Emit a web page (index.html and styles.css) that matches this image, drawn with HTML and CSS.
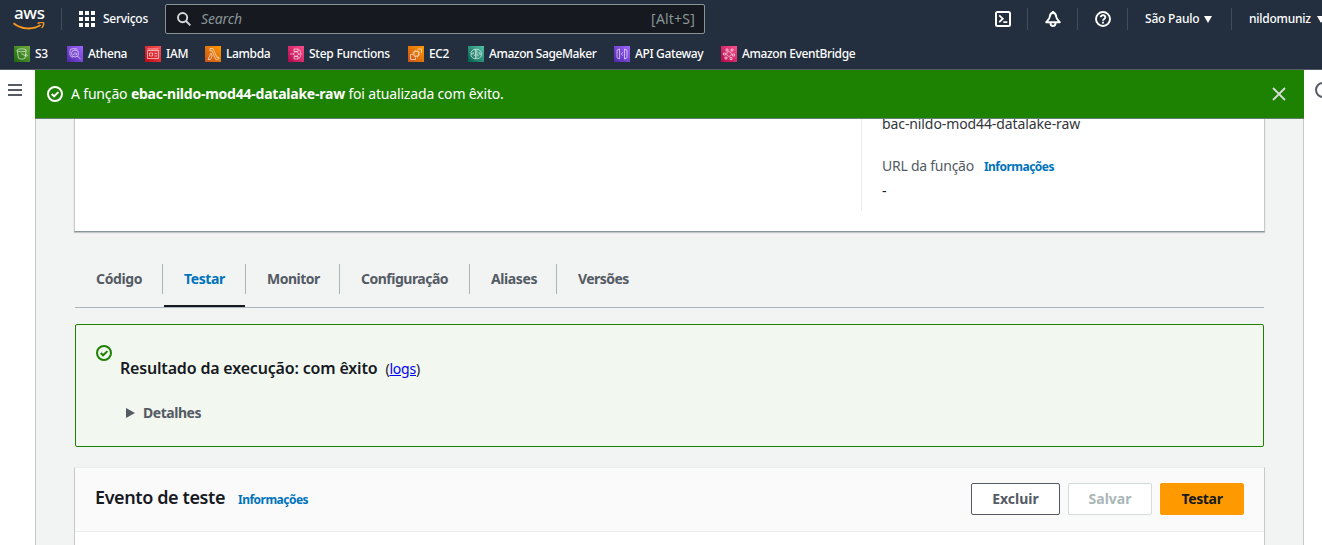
FILE: index.html
```
<!DOCTYPE html>
<html lang="pt-BR">
<head>
<meta charset="utf-8">
<title>Lambda</title>
<link rel="stylesheet" href="styles.css">
</head>
<body>
<svg width="0" height="0" class="defs">
  <defs>
    <linearGradient id="green" x1="0" y1="1" x2="1" y2="0"><stop stop-color="#1b660f"/><stop offset="1" stop-color="#6cae3e"/></linearGradient>
    <linearGradient id="purple" x1="0" y1="1" x2="1" y2="0"><stop stop-color="#4d27a8"/><stop offset="1" stop-color="#a166ff"/></linearGradient>
    <linearGradient id="red" x1="0" y1="1" x2="1" y2="0"><stop stop-color="#bd0816"/><stop offset="1" stop-color="#ff5252"/></linearGradient>
    <linearGradient id="orange" x1="0" y1="1" x2="1" y2="0"><stop stop-color="#c8511b"/><stop offset="1" stop-color="#f90"/></linearGradient>
    <linearGradient id="pink" x1="0" y1="1" x2="1" y2="0"><stop stop-color="#b0084d"/><stop offset="1" stop-color="#ff4f8b"/></linearGradient>
    <linearGradient id="teal" x1="0" y1="1" x2="1" y2="0"><stop stop-color="#055f4e"/><stop offset="1" stop-color="#56c0a7"/></linearGradient>
  </defs>
</svg>
<header class="nav">
  <div class="topbar">
    <div class="logo"><span class="logo-text">aws</span>
      <svg class="swoosh" width="32" height="9" viewBox="0 0 32 9"><path d="M.5 1.200C8.500 7.800 20 8 27.600 3.100" fill="none" stroke="#f7981f" stroke-width="1.800"/><path d="M24.600 1.500C27 .5 30 .3 30.600 1c.5.8-.4 3.500-2 5" fill="none" stroke="#f7981f" stroke-width="1.400"/></svg>
    </div>
    <span class="vline"></span>
    <div class="services">
      <svg width="16" height="16" viewBox="0 0 16 16" fill="#fff"><path d="M0 0h4v4H0zM6 0h4v4H6zM12 0h4v4h-4zM0 6h4v4H0zM6 6h4v4H6zM12 6h4v4h-4zM0 12h4v4H0zM6 12h4v4H6zM12 12h4v4h-4z"/></svg>
      <span>Serviços</span>
    </div>
    <div class="search">
      <svg width="14" height="14" viewBox="0 0 14 14" fill="none" stroke="#d5dbdb" stroke-width="1.9"><circle cx="5.6" cy="5.6" r="4.6"/><path d="m9 9 4.3 4.3"/></svg>
      <i>Search</i><span class="hint">[Alt+S]</span>
    </div>
    <div class="tools">
      <div class="tool"><svg width="16" height="16" viewBox="0 0 16 16" fill="none" stroke="#fff" stroke-width="2"><rect x="1" y="1" width="14" height="14" rx="1.5"/><path d="m4.2 4.4 3.600 3.300-3.600 3.400M8.300 11.200h4" stroke-width="1.800"/></svg></div>
      <div class="tool"><svg width="16" height="16" viewBox="0 0 16 16" fill="none" stroke="#fff" stroke-width="1.900" stroke-linejoin="round"><path d="M8 1.500C5.500 2 4.900 4 4.700 6 4.500 8 3 9 1.200 11.200h13.600C13 9 11.500 8 11.300 6 11.100 4 10.500 2 8 1.500zM8 0v2M5.400 12c.2 4 5 4 5.200 0"/></svg></div>
      <div class="tool"><svg width="16" height="16" viewBox="0 0 16 16" fill="none" stroke="#fff" stroke-width="1.900"><circle cx="8" cy="8" r="7"/><path d="M5.700 6.300c0-3 4.700-2.800 4.600 0C10.300 8 8 7.900 8 9.700"/><path d="M8 10.700v1.900"/></svg></div>
      <div class="tool region"><span>São Paulo</span><svg width="8" height="7" viewBox="0 0 8 7" fill="#fff"><path d="M0 0h8L4 7z"/></svg></div>
      <div class="tool user"><span>nildomuniz</span><svg width="8" height="7" viewBox="0 0 8 7" fill="#fff"><path d="M0 0h8L4 7z"/></svg></div>
    </div>
  </div>
  <nav class="favorites">
    <a class="s3"><svg class="svc" viewBox="0 0 16 16"><path fill="url(#green)" d="M0 0h16v16H0z"/><path d="M3.200 4.500 4.500 12.200c1.500 1.200 5 1.200 6.500 0l1.200-7.700M3.200 4.300c0-1.900 9-1.900 9 0s-9 1.900-9 0M7.500 7.800l5 2.300c1.300.2 1-1.200-.7-2.100"/></svg>S3</a>
    <a class="athena"><svg class="svc" viewBox="0 0 16 16"><path fill="url(#purple)" d="M0 0h16v16H0z"/><circle cx="8" cy="7.500" r="3.500"/><path d="m10.500 10 3 3.200M6.500 9V7.500M8 9.500V6M9.500 9V7M3 9V4c0-1.700 7-1.700 7.500-.4M3 9.200c.2 1.200 1.500 1.800 3 2"/></svg>Athena</a>
    <a class="iam"><svg class="svc" viewBox="0 0 16 16"><path fill="url(#red)" d="M0 0h16v16H0z"/><path d="M2.500 4.500h11v8h-11zM2.500 3h11M4.500 7h3v3h-3zM9.500 7.500h2.500M9.500 10h2.500"/></svg>IAM</a>
    <a class="lambda"><svg class="svc" viewBox="0 0 16 16"><path fill="url(#orange)" d="M0 0h16v16H0z"/><path d="M5 2.500h3l4 9 1.300-.5.7 1.800-3 1-4-9H5zM6 7.300l1.200 2.600-1.700 3.600H3z"/></svg>Lambda</a>
    <a class="step"><svg class="svc" viewBox="0 0 16 16"><path fill="url(#pink)" d="M0 0h16v16H0z"/><path d="M6 3h4v2.500H6zM6 10.500h4V13H6zM2 8h3M11 8h3M8 5.500 11 8l-3 2.500L5 8zM10 3.800c2 0 2.500 1 2.500 3M10 12.200c2 0 2.500-1 2.500-3"/></svg>Step Functions</a>
    <a class="ec2"><svg class="svc" viewBox="0 0 16 16"><path fill="url(#orange)" d="M0 0h16v16H0z"/><path d="M6 5.500h4.500V10H6zM7.300 5.500V4M9.200 5.500V4M10.500 6.800H12M10.500 8.700H12M7.300 10v1.500M9.200 10v1.500M6 6.800H4.500M5.500 8.500h-3v5h5V12M9.500 3h4v4"/></svg>EC2</a>
    <a class="sage"><svg class="svc" viewBox="0 0 16 16"><path fill="url(#teal)" d="M0 0h16v16H0z"/><path d="M7.500 3v10L5 12.200 3 10V6l2-2zM8.800 3v10l2.500-.8L13.300 10V6l-2-2zM3 8h2.200V6M7.500 8.500 5.500 10M13.300 8H11V6M8.800 8.500l2 1.500"/></svg>Amazon SageMaker</a>
    <a class="api"><svg class="svc" viewBox="0 0 16 16"><path fill="url(#purple)" d="M0 0h16v16H0z"/><path d="M3 4.200 5.500 3v10L3 11.800zM13 4.200 10.500 3v10l2.500-1.200zM8.800 6.300 7.300 8l1.500 1.700"/></svg>API Gateway</a>
    <a class="bridge"><svg class="svc" viewBox="0 0 16 16"><path fill="url(#pink)" d="M0 0h16v16H0z"/><path d="m8 5.500 2.200 1.200v2.600L8 10.500 5.800 9.300V6.700zM5 3h2v2H5zM10 3h2v2h-2zM2.500 7h2v2h-2zM11.500 8h2v2h-2zM4 11h2v2H4zM9 11.500h2v2H9z"/></svg>Amazon EventBridge</a>
  </nav>
</header>
<div class="shell">
  <aside class="left"><svg width="14" height="12" viewBox="0 0 14 12" fill="#545b64"><path d="M0 0h14v2H0zM0 5h14v2H0zM0 10h14v2H0z"/></svg></aside>
  <main class="main">
    <div class="flash">
      <svg width="16" height="16" viewBox="0 0 16 16" fill="none" stroke="#fff" stroke-width="2"><circle cx="8" cy="8" r="7"/><path d="m4.700 8 2.400 2.300 4.300-4.200"/></svg>
      <p>A função <b>ebac-nildo-mod44-datalake-raw</b> foi atualizada com êxito.</p>
      <svg class="close" width="14" height="14" viewBox="0 0 14 14" stroke="#d5dbdb" stroke-width="1.800"><path d="m1 1 12 12M13 1 1 13"/></svg>
    </div>
    <div class="content">
      <section class="overview">
        <div class="details">
          <div class="arn">bac-nildo-mod44-datalake-raw</div>
          <div class="url"><span>URL da função</span><a class="info">Informações</a></div>
          <div class="dash">-</div>
        </div>
      </section>
      <div class="tabs">
        <span class="tab t1">Código</span><span class="tab t2 active">Testar</span><span class="tab t3">Monitor</span><span class="tab t4">Configuração</span><span class="tab t5">Aliases</span><span class="tab t6">Versões</span>
      </div>
      <section class="alert">
        <svg width="16" height="16" viewBox="0 0 16 16" fill="none" stroke="#1d8102" stroke-width="2"><circle cx="8" cy="8" r="7"/><path d="m4.700 8 2.400 2.300 4.300-4.200"/></svg>
        <div class="alert-body">
          <div class="result"><strong>Resultado da execução: com êxito</strong><span>(<a href="#">logs</a>)</span></div>
          <div class="expand"><svg width="9" height="10" viewBox="0 0 9 10" fill="#545b64"><path d="M0 0v10l9-5z"/></svg><span>Detalhes</span></div>
        </div>
      </section>
      <section class="event">
        <div class="event-head">
          <h2>Evento de teste</h2><a class="info">Informações</a>
          <div class="actions"><button class="btn del">Excluir</button><button class="btn save" disabled>Salvar</button><button class="btn primary">Testar</button></div>
        </div>
      </section>
    </div>
  </main>
  <aside class="right"><svg width="16" height="16" viewBox="0 0 16 16" fill="none" stroke="#545b64" stroke-width="2"><circle cx="8" cy="8" r="7"/></svg></aside>
</div>
</body>
</html>
```
FILE: styles.css
```
* { box-sizing: border-box; }
body { margin: 0; width: 1322px; height: 545px; overflow: hidden; display: flex; flex-direction: column; background: #fff; color: #16191f; font: 14px/20px "Noto Sans", sans-serif; white-space: nowrap; }
svg { display: block; flex: none; }
.defs { position: absolute; }
.nav { height: 70px; flex: none; background: #232f3e; color: #fff; border-bottom: 1px solid #545b64; overflow: hidden; }
.topbar { height: 38px; display: flex; align-items: center; }
.topbar > * { flex: none; }
.logo { width: 61px; padding-left: 13px; height: 38px; display: flex; flex-direction: column; }
.logo-text { font-size: 17px; line-height: 20px; height: 17px; margin-top: 3px; font-weight: 500; letter-spacing: -.4px; padding-left: 1px; }
.swoosh { margin-top: 2px; }
.vline { width: 1px; height: 22px; background: #414d5c; }
.services { width: 103px; padding-left: 17px; display: flex; gap: 8px; font-size: 12px; font-weight: 500; letter-spacing: -.28px; }
.services svg { margin-top: 2px; }
.search { width: 540px; height: 30px; border: 1px solid #879596; border-radius: 2px; background: #16191f; color: #879596; display: flex; align-items: center; padding: 0 9px 0 11px; }
.search i { margin-left: 10px; letter-spacing: -.15px; }
.hint { margin-left: auto; letter-spacing: .2px; }
.tools { margin-left: 273px; width: 344px; overflow: hidden; display: flex; align-items: center; font-size: 12px; font-weight: 500; }
.tool { height: 22px; width: 50px; flex: none; display: flex; align-items: center; padding-left: 17px; border-right: 1px solid #414d5c; }
.region { width: 104px; gap: 5px; letter-spacing: -.2px; }
.user { width: 100px; border: 0; gap: 6px; letter-spacing: -.25px; }
.favorites { display: flex; height: 31px; align-items: center; padding-left: 14px; font-size: 12px; font-weight: 500; letter-spacing: -.36px; }
.favorites a { display: flex; align-items: center; gap: 5px; flex: none; }
.svc { width: 16px; height: 16px; fill: none; stroke: rgba(255,255,255,.8); stroke-width: .75; }
.svc path:first-child { stroke: none; }
.s3 { width: 53px; }
.athena { width: 78px; }
.iam { width: 60px; }
.lambda { width: 83px; }
.step { width: 120px; letter-spacing: -.25px; }
.ec2 { width: 60px; }
.sage { width: 146px; letter-spacing: -.42px; }
.api { width: 107px; }
.shell { flex: 1; display: flex; min-height: 0; }
.left { width: 35px; padding: 14px 8px; }
.right { width: 18px; padding: 12px 0 0 11px; overflow: hidden; }
.main { width: 1269px; background: #f2f3f3; border: solid #c5c9cb; border-width: 0 1px; display: flex; flex-direction: column; }
.flash { margin: 0 -1px; height: 49px; flex: none; background: #1d8102; color: #fff; border-bottom: 1px solid #62806a; display: flex; align-items: center; padding: 0 18px 0 12px; z-index: 1; }
.flash p { margin: 0 0 0 8px; letter-spacing: -.17px; }
.flash b { letter-spacing: -.23px; }
.close { margin-left: auto; }
.content { padding: 0 39px; }
.overview { margin: 0 -1px; height: 113px; background: #fff; border: solid #c5c9cb; border-width: 0 1px 1px; border-bottom-color: #879596; box-shadow: 0 1px 1px rgba(0,28,36,.2); padding-left: 786px; }
.details { display: flow-root; height: 92px; border-left: 1px solid #eaeded; padding-left: 20px; }
.arn { height: 20px; margin-top: -5px; letter-spacing: -.1px; color: #33363b; }
.url { display: flex; margin-top: 22px; color: #545b64; gap: 10px; letter-spacing: -.25px; }
.info { color: #0073bb; font-size: 12px; font-weight: 700; letter-spacing: -.52px; line-height: 22px; }
.dash { margin-top: 3px; }
.tabs { margin-top: 32px; height: 44px; border-bottom: 1px solid #aab7b8; display: flex; color: #545b64; font-weight: 700; letter-spacing: -.4px; }
.tab { height: 30px; line-height: 30px; border-right: 1px solid #aab7b8; padding-left: 21px; }
.t1 { width: 88px; letter-spacing: -.35px; }
.t2 { width: 83px; position: relative; }
.t3 { width: 94px; letter-spacing: -.5px; }
.t4 { width: 130px; letter-spacing: -.5px; }
.t5 { width: 87px; }
.t6 { border: 0; letter-spacing: -.55px; }
.active { color: #0073bb; }
.active::after { content: ""; position: absolute; left: 1px; right: 0; top: 41px; height: 2px; background: #16191f; }
.alert { margin-top: 16px; height: 123px; border: 1px solid #1d8102; border-radius: 2px; background: #f2f8f0; padding: 20px; display: flex; }
.alert-body { margin: 13px 0 0 8px; }
.result { display: flex; gap: 8px; }
.result strong { font-size: 16px; font-weight: 600; letter-spacing: -.18px; }
.result span { line-height: 21px; letter-spacing: -.2px; }
.result a { color: #00e; }
.expand { margin-top: 24px; padding-left: 6px; display: flex; align-items: center; gap: 8px; color: #545b64; font-weight: 700; letter-spacing: -.47px; }
.event { margin: 20px -1px 0; height: 78px; background: #fff; border: solid #c5c9cb; border-width: 1px 1px 0; border-top-color: #eaeded; }
.event-head { height: 64px; background: #fafafa; border-bottom: 1px solid #eaeded; padding: 0 20px 2px; display: flex; align-items: center; }
h2 { margin: -4px 13px 0 0; font-size: 18px; font-weight: 600; line-height: 22px; letter-spacing: -.4px; }
.event-head .info { margin-top: 2px; }
.actions { margin-left: auto; display: flex; gap: 8px; }
.btn { height: 32px; width: 84px; padding: 0; border: 1px solid #d5dbdb; border-radius: 2px; background: #fff; color: #aab7b8; font: 700 14px/20px "Noto Sans", sans-serif; }
.del { width: 89px; border-color: #545b64; color: #545b64; }
.primary { background: #f90; border-color: #f90; color: #16191f; letter-spacing: -.35px; }
```
